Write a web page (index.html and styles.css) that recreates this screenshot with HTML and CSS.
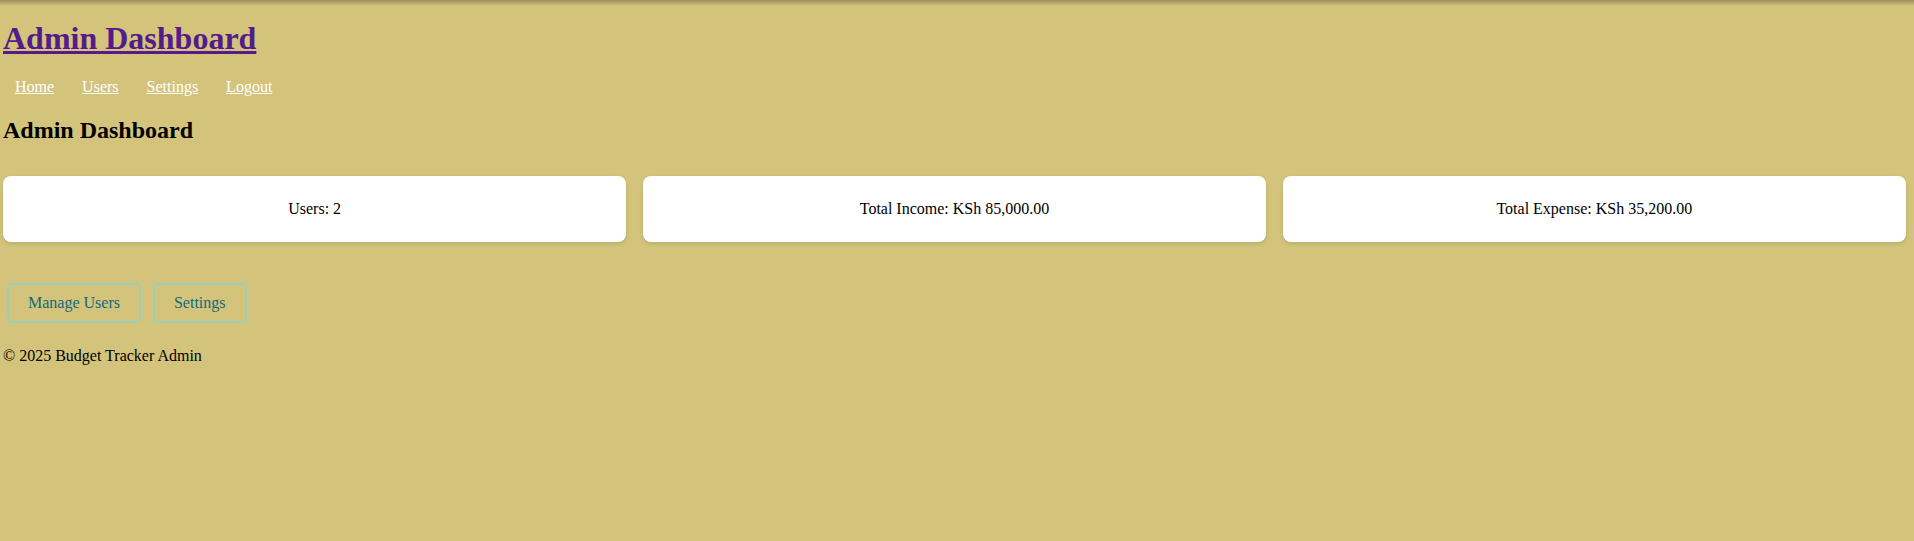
FILE: index.html
```html
<!DOCTYPE html>
<html lang="en">
<head>
<meta charset="utf-8">
<title>Admin Dashboard</title>
<link rel="stylesheet" href="styles.css">
</head>
<body>
<div class="page">
  <h1 class="site-title"><a href="#">Admin Dashboard</a></h1>
  <nav class="nav">
    <a href="#">Home</a>
    <a href="#">Users</a>
    <a href="#">Settings</a>
    <a href="#">Logout</a>
  </nav>
  <h2 class="page-title">Admin Dashboard</h2>
  <div class="cards">
    <div class="card">Users: 2</div>
    <div class="card">Total Income: KSh 85,000.00</div>
    <div class="card">Total Expense: KSh 35,200.00</div>
  </div>
  <div class="actions">
    <a class="btn" href="#">Manage Users</a>
    <a class="btn" href="#">Settings</a>
  </div>
  <footer class="footer">© 2025 Budget Tracker Admin</footer>
</div>
</body>
</html>
```

FILE: styles.css
```css
html, body {
  margin: 0;
  padding: 0;
}
body {
  background-color: #d4c47b;
  background-image: linear-gradient(rgba(0, 0, 0, 0.28), rgba(0, 0, 0, 0) 6px);
  background-repeat: no-repeat;
  font-family: "Liberation Serif", "Times New Roman", serif;
  font-size: 16px;
  color: #000;
  min-height: 100vh;
}
.page {
  padding: 0 8px 0 3px;
}
.site-title {
  font-size: 32px;
  margin: 0;
  padding-top: 20px;
  margin-bottom: 21.44px;
  line-height: normal;
}
.site-title a {
  color: #551a8b;
}
.nav {
  display: flex;
  gap: 28px;
  padding-left: 12px;
  line-height: normal;
}
.nav a {
  color: #fff;
}
.page-title {
  font-size: 24px;
  margin: 20.5px 0 0 0;
  line-height: normal;
}
.cards {
  display: flex;
  gap: 16.5px;
  margin-top: 32.5px;
}
.card {
  flex: 1;
  background: #fff;
  border-radius: 8px;
  padding: 24px 10px;
  text-align: center;
  line-height: normal;
  box-shadow: 0 2px 5px rgba(0, 0, 0, 0.12);
}
.actions {
  display: flex;
  gap: 12px;
  padding-left: 4px;
  margin-top: 40.5px;
}
.btn {
  display: inline-block;
  border: 2px solid #96d1bd;
  border-radius: 5px;
  padding: 9px 19px;
  color: #12697a;
  text-decoration: none;
  line-height: normal;
}
.footer {
  margin-top: 24px;
  line-height: normal;
}
```
